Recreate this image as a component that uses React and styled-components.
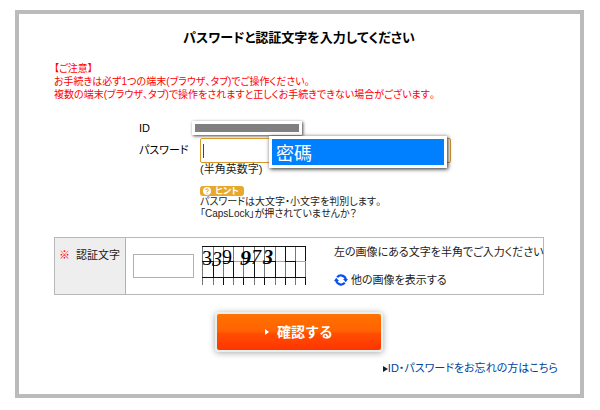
import { useState } from 'react'
import styled, { createGlobalStyle } from 'styled-components'

const GlobalStyle = createGlobalStyle`
    * {
        box-sizing: border-box;
    }
    body {
        margin: 0;
        background-color: #fff;
        color: #222;
        font-family: 'Liberation Sans', 'Noto Sans CJK JP', sans-serif;
        font-size: 11px;
        line-height: 13px;
        font-feature-settings: 'palt';
    }
`

const Page = styled.div`
    padding: 10px 16px 12px 15px;
`

const Panel = styled.form`
    border: 4px solid #bbb;
    padding: 16px 36px 14px 35px;
`

const Title = styled.h1`
    margin: 0;
    font-size: 13px;
    line-height: 16px;
    font-weight: 700;
    font-kerning: none;
    color: #000;
    text-align: center;
`

const Notice = styled.p`
    margin: 16px 0 0;
    font-size: 10px;
    line-height: 13px;
    font-kerning: none;
    color: #f00;
    white-space: nowrap;
`

const Fields = styled.div`
    display: grid;
    grid-template-columns: 61px 251px;
    margin: 17px 0 0 85px;
`

const FieldLabel = styled.label`
    line-height: 24px;
    color: #000;
`

const MaskRow = styled.div`
    display: flex;
    align-items: center;
    height: 20px;
    margin-left: -8px;
`

const IdMask = styled.div`
    width: 110px;
    height: 14px;
    border: 3px solid #fff;
    background-color: #808080;
    box-shadow: 1px 1px 3px #444;
`

const IdLabel = styled.span`
    line-height: 20px;
    color: #000;
`

const PasswordBox = styled.div`
    position: relative;
`

const PasswordInput = styled.input`
    display: block;
    width: 100%;
    height: 25px;
    padding: 0 2px;
    border: 1px solid #d9982b;
    border-radius: 2px;
    outline: none;
    background: linear-gradient(#444, #444) 2px 50% / 1px 14px no-repeat #fff;
    font: inherit;
    caret-color: transparent;
`

const Callout = styled.div`
    position: absolute;
    top: -2px;
    left: 69px;
    width: 178px;
    height: 32px;
    padding-left: 4px;
    border: 3px solid #fff;
    background-color: #0080ff;
    box-shadow: 1px 1px 4px #222;
    color: #fff;
    font-family: 'Noto Sans CJK TC', sans-serif;
    font-size: 18px;
    line-height: 26px;
`

const Help = styled.div`
    grid-column: 2;
    font-size: 11px;
    line-height: 13px;
    white-space: nowrap;
`

const HintBadge = styled.div`
    display: flex;
    align-items: center;
    gap: 4px;
    width: 44px;
    height: 10px;
    margin-top: 10px;
    padding-left: 3px;
    border-radius: 3px;
    background-color: #e8a82c;
    color: #fff;
    font-size: 9px;
    line-height: 10px;
    font-weight: 700;
`

const HintText = styled.p`
    margin: 0;
    font-size: 10px;
    line-height: 12px;
    font-kerning: none;
`

const CaptchaRow = styled.div`
    display: grid;
    grid-template-columns: 71px 1fr;
    min-height: 58px;
    margin-top: 17px;
    border: 1px solid #b8b8b8;
`

const CaptchaHead = styled.label`
    padding: 11px 4px;
    border-right: 1px solid #b0b0b0;
    background-color: #eee;
    white-space: nowrap;
`

const Required = styled.span`
    margin-right: 6px;
    color: #f00;
`

const CaptchaBody = styled.div`
    display: flex;
    align-items: flex-start;
    padding: 8px 0 0 7px;
`

const CaptchaInput = styled.input`
    width: 61px;
    height: 24px;
    margin: 8px 8px 0 0;
    padding: 0 2px;
    border: 1px solid #b0b0b0;
    font: inherit;
`

const CaptchaHelp = styled.div`
    display: flex;
    flex-direction: column;
    align-items: flex-start;
    gap: 14px;
    margin-left: 28px;
    white-space: nowrap;
`

const RefreshButton = styled.button`
    display: flex;
    align-items: center;
    gap: 3px;
    padding: 0;
    border: none;
    background: none;
    color: inherit;
    font: inherit;
    font-feature-settings: inherit;
    cursor: pointer;
`

const SubmitButton = styled.button`
    display: flex;
    align-items: center;
    justify-content: center;
    gap: 8px;
    width: 168px;
    height: 40px;
    margin: 17px auto 0;
    border: 2px solid #e6f0ef;
    border-radius: 4px;
    background: linear-gradient(#ff7200, #ff6200 48%, #ff4e00 54%, #ff3400);
    box-shadow: 0 1px 6px #aaa;
    color: #fff;
    font-family: inherit;
    font-size: 14px;
    line-height: 16px;
    font-weight: 700;
    cursor: pointer;
`

const Forgot = styled.div`
    display: flex;
    align-items: center;
    justify-content: flex-end;
    margin: 10px -14px 0 0;
    padding-bottom: 5px;
`

const ForgotLink = styled.a`
    color: #003f9e;
    text-decoration: none;
`

const digits = [
    { char: '3', x: 0, y: 19, size: 20 },
    { char: '3', x: 10, y: 20, size: 20, italic: true },
    { char: '9', x: 20, y: 18, size: 20 },
    { char: '9', x: 38, y: 19, size: 22, italic: true, bold: true },
    { char: '7', x: 49, y: 18, size: 20, italic: true },
    { char: '3', x: 61, y: 18, size: 20, italic: true, bold: true },
]

const columns = [0, 11, 21, 31, 41, 52, 62, 73, 83, 93, 103]

function CaptchaPicture(){
    return (
    <svg width="104" height="39" viewBox="0 0 104 39" role="img" aria-label="認証画像">
        <g shapeRendering="crispEdges" fill="none">
            {columns.map((x) => <path key={x} d={`M${x + 0.5} 0V39`} stroke="#777" />)}
            <path d="M0 15.5H104" stroke="#aaa" />
            <path
                d="M0 .5H83M83 .5H104M0 31.5H104M11.5 15V31M31.5 15V31M52.5 15V31M73.5 15V31M93.5 15V31M21.5 31V39M41.5 31V39M62.5 31V39M83.5 31V39M103.5 31V39M83.5 0V15M103.5 0V15M0 15.5H11M21 15.5H31M41 15.5H52M62 15.5H73M83 15.5H93"
                stroke="#111"
            />
        </g>
        {digits.map((d) => (
            <text
                key={d.x}
                x={d.x}
                y={d.y}
                fontFamily="Liberation Serif, serif"
                fontSize={d.size}
                fontStyle={d.italic ? 'italic' : 'normal'}
                fontWeight={d.bold ? 700 : 400}
            >{d.char}</text>
        ))}
    </svg>)
}

function RefreshIcon(){
    return (
    <svg width="14" height="14" viewBox="0 0 14 14" aria-hidden="true">
        <path d="M3.2 4.2A5 5 0 0 1 11.8 6.2M10.8 9.8A5 5 0 0 1 2.2 7.8" fill="none" stroke="#0a50f0" strokeWidth="2.2" />
        <path d="M9 6H14L11.8 9.2ZM5 8H0L2.2 4.8Z" fill="#0a50f0" />
    </svg>)
}

function App(){
    const [password, setPassword] = useState('')
    const [captcha, setCaptcha] = useState('')

    return (
    <Page>
        <GlobalStyle />
        <Panel onSubmit={(e) => e.preventDefault()}>
            <Title>パスワードと認証文字を入力してください</Title>
            <Notice>
                【ご注意】<br />
                お手続きは必ず1つの端末(ブラウザ、タブ)でご操作ください。<br />
                複数の端末(ブラウザ、タブ)で操作をされますと正しくお手続きできない場合がございます。
            </Notice>

            <Fields>
                <IdLabel>ID</IdLabel>
                <MaskRow><IdMask /></MaskRow>
                <FieldLabel htmlFor="password">パスワード</FieldLabel>
                <PasswordBox>
                    <PasswordInput
                        id="password"
                        type="password"
                        autoFocus
                        value={password}
                        onChange={(e) => setPassword(e.target.value)}
                    />
                    <Callout>密碼</Callout>
                </PasswordBox>
                <Help>
                    (半角英数字)
                    <HintBadge>
                        <svg width="8" height="8" viewBox="0 0 8 8" aria-hidden="true">
                            <circle cx="4" cy="4" r="4" fill="#fff" />
                            <path d="M2.7 3A1.3 1.3 0 1 1 4 4.4V5M4 5.7V6.7" fill="none" stroke="#e8a82c" />
                        </svg>
                        ヒント
                    </HintBadge>
                    <HintText>
                        パスワードは大文字・小文字を判別します。<br />
                        「CapsLock」が押されていませんか？
                    </HintText>
                </Help>
            </Fields>

            <CaptchaRow>
                <CaptchaHead htmlFor="captcha"><Required>※</Required>認証文字</CaptchaHead>
                <CaptchaBody>
                    <CaptchaInput
                        id="captcha"
                        type="text"
                        value={captcha}
                        onChange={(e) => setCaptcha(e.target.value)}
                    />
                    <CaptchaPicture />
                    <CaptchaHelp>
                        <span>左の画像にある文字を半角でご入力ください</span>
                        <RefreshButton type="button"><RefreshIcon />他の画像を表示する</RefreshButton>
                    </CaptchaHelp>
                </CaptchaBody>
            </CaptchaRow>

            <SubmitButton type="submit">
                <svg width="4" height="6" viewBox="0 0 4 6" aria-hidden="true"><path d="M0 0L4 3L0 6Z" fill="#fff" /></svg>
                確認する
            </SubmitButton>

            <Forgot>
                <svg width="5" height="6" viewBox="0 0 5 6" aria-hidden="true"><path d="M0 0L5 3L0 6Z" fill="#123" /></svg>
                <ForgotLink href="#forgot">ID・パスワードをお忘れの方はこちら</ForgotLink>
            </Forgot>
        </Panel>
    </Page>)
}

export default App
